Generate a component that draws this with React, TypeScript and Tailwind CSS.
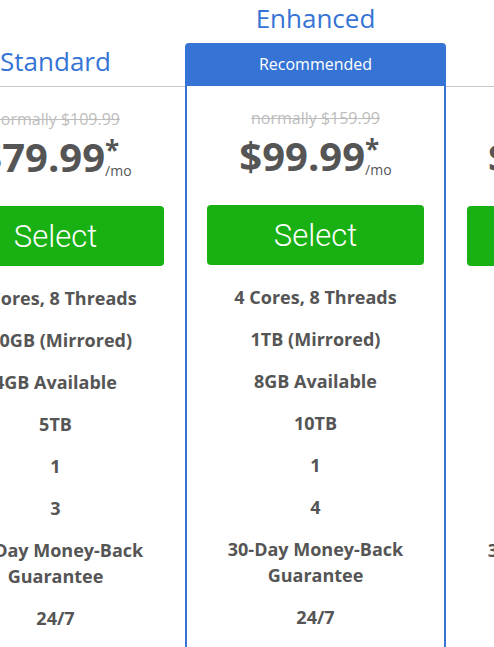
import React from 'react';

interface Plan {
  name: string;
  normally: string;
  price: string;
  featured?: boolean;
  features: string[];
}

const plans: Plan[] = [
  {
    name: 'Standard',
    normally: 'normally $109.99',
    price: '$79.99',
    features: ['4 Cores, 8 Threads', '500GB (Mirrored)', '4GB Available', '5TB', '1', '3', '30-Day Money-Back Guarantee', '24/7'],
  },
  {
    name: 'Enhanced',
    normally: 'normally $159.99',
    price: '$99.99',
    featured: true,
    features: ['4 Cores, 8 Threads', '1TB (Mirrored)', '8GB Available', '10TB', '1', '4', '30-Day Money-Back Guarantee', '24/7'],
  },
  {
    name: 'Premium',
    normally: 'normally $209.99',
    price: '$119.99',
    features: ['4 Cores, 8 Threads', '2TB (Mirrored)', '16GB Available', '15TB', '1', '5', '30-Day Money-Back Guarantee', '24/7'],
  },
];

function PlanBody({ plan }: { plan: Plan }) {
  return (
    <div className="pt-[21px] text-center">
      <div className="text-[16px] leading-[22px] text-[#bdbdbd] line-through">{plan.normally}</div>
      {/* price with asterisk + /mo stacked after it */}
      <div className="mt-[3px] flex justify-center text-[#555555]">
        <span className="text-[40px] leading-[48px] font-bold">{plan.price}</span>
        <span className="flex h-[48px] flex-col items-start justify-between">
          <span className="mt-[4px] text-[26px] leading-[26px] font-bold">*</span>
          <span className="mb-[6px] text-[14px] leading-[15px]">/mo</span>
        </span>
      </div>
      <button
        className="mt-[25px] flex h-[60px] w-full items-center justify-center rounded-[4px] bg-[#19b014] pt-[3px] text-[31px] font-light text-white"
        style={{ fontFamily: 'Roboto, "Open Sans", sans-serif' }}
      >
        Select
      </button>
      <ul className="mt-[19px] flex flex-col gap-[16px] pb-[40px] text-[18px] leading-[26px] font-bold text-[#555555]">
        {plan.features.map((f, i) => (
          <li key={i}>{f}</li>
        ))}
      </ul>
    </div>
  );
}

export default function App() {
  return (
    <div
      className="h-[647px] w-full overflow-hidden bg-white"
      style={{ fontFamily: '"Open Sans", "Liberation Sans", sans-serif' }}
    >
      <div className="ml-[-74px] flex items-start">
        {plans.map((plan) =>
          plan.featured ? (
            <div key={plan.name} className="w-[261px] shrink-0">
              <div className="h-[43px] text-center text-[26px] leading-[36px] text-[#3574d4]">{plan.name}</div>
              <div className="h-[43px] rounded-t-[4px] bg-[#3574d4] text-center text-[16px] leading-[43px] text-white">
                Recommended
              </div>
              <div className="border-2 border-t-0 border-[#3574d4] px-[20px]">
                <PlanBody plan={plan} />
              </div>
            </div>
          ) : (
            <div key={plan.name} className="w-[259px] shrink-0">
              <div className="h-[43px]" />
              <div className="h-[44px] border-b border-[#c8c8c8] text-center text-[26px] leading-[36px] text-[#3574d4]">
                {plan.name}
              </div>
              <div className="px-[21px]">
                <PlanBody plan={plan} />
              </div>
            </div>
          )
        )}
      </div>
    </div>
  );
}
